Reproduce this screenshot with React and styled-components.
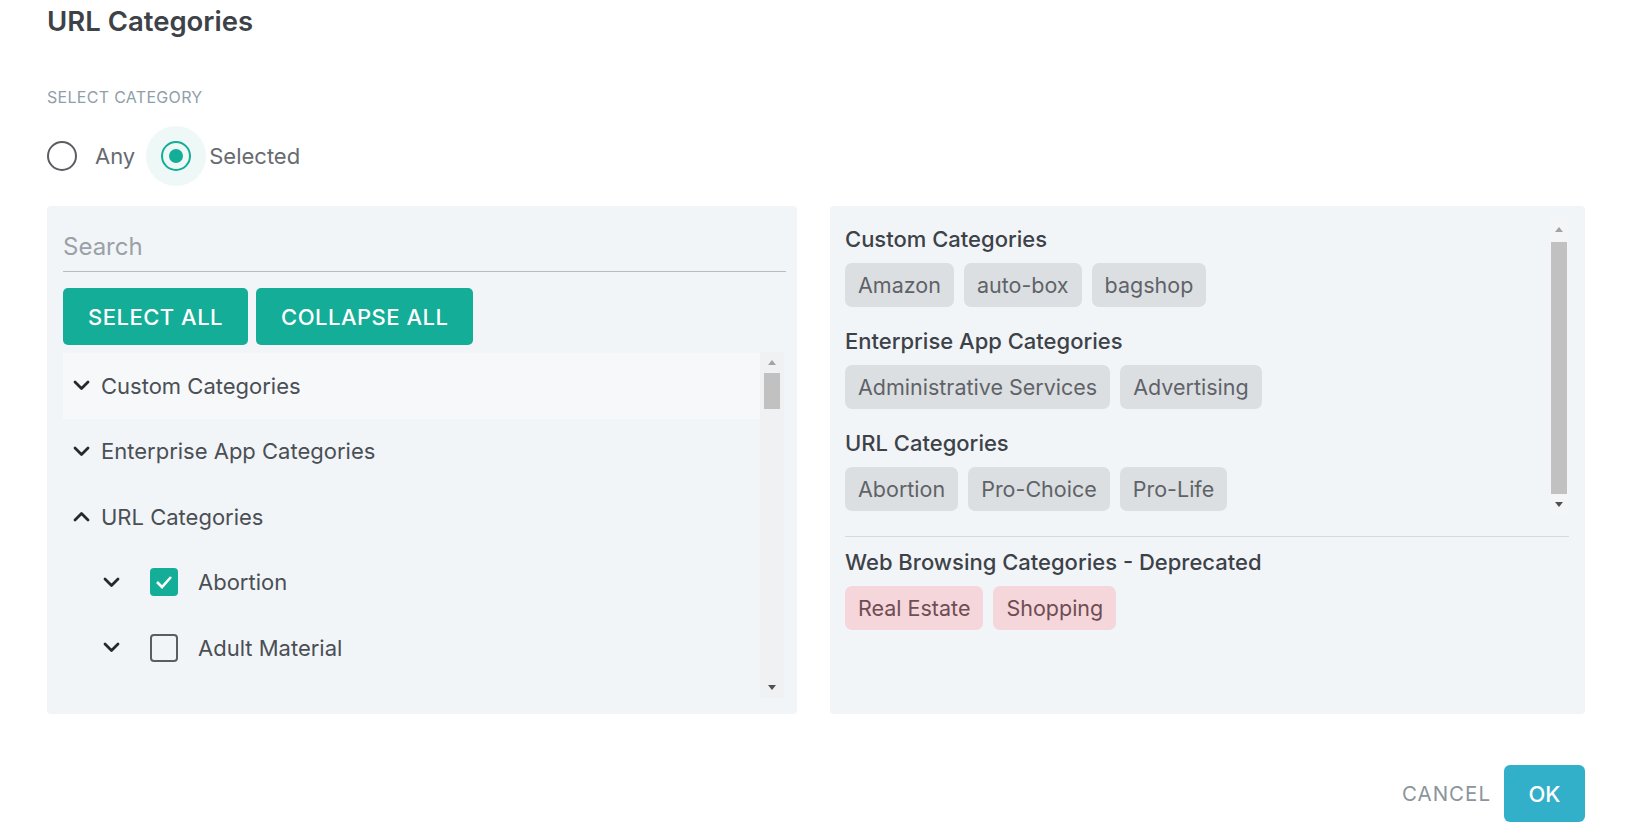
import React from 'react';
import styled, { createGlobalStyle } from 'styled-components';

const GlobalStyle = createGlobalStyle`
  * { box-sizing: border-box; }
  body {
    margin: 0;
    background: #ffffff;
    font-family: Inter, "Noto Sans", sans-serif;
  }
`;

const Page = styled.div`
  width: 1632px;
  height: 837px;
  padding: 5px 47px 0 47px;
  display: flex;
  flex-direction: column;
`;

const Title = styled.h1`
  margin: 0;
  font-size: 27.5px;
  line-height: 33px;
  font-weight: 600;
  color: #3d4248;
`;

const SectionLabel = styled.div`
  margin-top: 49px;
  font-size: 16px;
  line-height: 20px;
  letter-spacing: 0.3px;
  color: #8fa0aa;
`;

const RadioGroup = styled.div`
  display: flex;
  align-items: center;
  gap: 11px;
  margin-top: 19px;
  height: 60px;
`;

const RadioLabel = styled.label`
  display: flex;
  align-items: center;
  font-size: 22px;
  color: #666b70;
`;

const RadioHalo = styled.span`
  width: 60px;
  height: 60px;
  border-radius: 50%;
  display: flex;
  align-items: center;
  justify-content: center;
  margin-left: ${(p) => (p.$first ? '-15px' : '0')};
  margin-right: 3px;
  background: ${(p) => (p.$checked ? '#eef8f6' : 'transparent')};
`;

const RadioCircle = styled.span`
  width: 30px;
  height: 30px;
  border-radius: 50%;
  border: 2.5px solid ${(p) => (p.$checked ? '#14ad97' : '#5a5e62')};
  display: flex;
  align-items: center;
  justify-content: center;

  &::after {
    content: '';
    width: 14px;
    height: 14px;
    border-radius: 50%;
    background: ${(p) => (p.$checked ? '#14ad97' : 'transparent')};
  }
`;

const Panels = styled.div`
  display: grid;
  grid-template-columns: 750px 755px;
  gap: 33px;
  margin-top: 20px;
  height: 508px;
`;

const Panel = styled.div`
  background: #f2f5f8;
  border-radius: 4px;
  display: flex;
  flex-direction: column;
`;

const LeftPanel = styled(Panel)`
  padding: 18px 13px 16px 16px;
`;

const SearchInput = styled.input`
  height: 48px;
  margin-right: -2px;
  border: none;
  border-bottom: 1px solid #b8bcc0;
  background: transparent;
  font-family: inherit;
  font-size: 24px;
  color: #3d4248;
  padding: 0 0 3px 0;
  outline: none;

  &::placeholder {
    color: #9aa1a7;
  }
`;

const ButtonRow = styled.div`
  display: flex;
  gap: 8px;
  margin-top: 16px;
`;

const TealButton = styled.button`
  height: 57px;
  padding: 0 25px;
  border: none;
  border-radius: 5px;
  background: #14ad97;
  color: #ffffff;
  font-family: inherit;
  font-size: 22px;
  font-weight: 500;
  letter-spacing: 0.5px;
`;

const TreeArea = styled.div`
  margin-top: 7px;
  flex: 1;
  display: flex;
`;

const TreeList = styled.div`
  flex: 1;
  padding-top: 1px;
`;

const TreeRow = styled.div`
  height: 65.5px;
  display: flex;
  align-items: center;
  padding-left: ${(p) => (p.$child ? '40px' : '10px')};
  background: ${(p) => (p.$hover ? '#f6f8fa' : 'transparent')};
  font-size: 22px;
  color: #4a4f55;
`;

const ChevronBox = styled.span`
  width: 17px;
  display: flex;
  margin-right: ${(p) => (p.$child ? '30px' : '11px')};
`;

const CheckBox = styled.span`
  width: 28px;
  height: 28px;
  border-radius: 4px;
  margin-right: 20px;
  display: flex;
  align-items: center;
  justify-content: center;
  background: ${(p) => (p.$checked ? '#14ad97' : 'transparent')};
  border: ${(p) => (p.$checked ? 'none' : '2.5px solid #5a5e62')};
`;

const ScrollTrack = styled.div`
  width: ${(p) => p.$width}px;
  background: ${(p) => p.$bg};
  display: flex;
  flex-direction: column;
  align-items: center;
`;

const ScrollArrow = styled.span`
  height: ${(p) => p.$h}px;
  display: flex;
  align-items: center;
  justify-content: center;
`;

const ScrollThumb = styled.div`
  width: 16px;
  background: #c1c1c1;
`;

const RightPanel = styled(Panel)`
  padding: 11px 9px 0 15px;
`;

const ScrollArea = styled.div`
  height: 298px;
  margin-right: 8px;
  display: flex;
`;

const SelectedList = styled.div`
  flex: 1;
  padding-top: 8px;
  display: flex;
  flex-direction: column;
  gap: 20px;
`;

const Group = styled.div`
  display: flex;
  flex-direction: column;
  gap: 10px;
`;

const GroupTitle = styled.div`
  font-size: 22px;
  line-height: 28px;
  font-weight: 500;
  color: #3d4248;
`;

const ChipRow = styled.div`
  display: flex;
  gap: 10px;
`;

const Chip = styled.span`
  height: 44px;
  padding: 0 13px;
  border-radius: 7px;
  display: flex;
  align-items: center;
  font-size: 21.5px;
  background: ${(p) => (p.$deprecated ? '#f5d6db' : '#dcdfe2')};
  color: ${(p) => (p.$deprecated ? '#6e4d53' : '#5f6368')};
`;

const Divider = styled.div`
  height: 1px;
  background: #d8dbde;
  margin: 21px 7px 11px 0;
`;

const Footer = styled.div`
  margin-top: 51px;
  display: flex;
  justify-content: flex-end;
  align-items: center;
  gap: 13px;
`;

const TextButton = styled.button`
  border: none;
  background: none;
  padding: 0;
  font-family: inherit;
  font-size: 20.5px;
  letter-spacing: 1px;
  color: #8b959b;
`;

const PrimaryButton = styled.button`
  width: 81px;
  height: 57px;
  border: none;
  border-radius: 6px;
  background: #33b0c9;
  color: #ffffff;
  font-family: inherit;
  font-size: 22px;
  font-weight: 500;
`;

const Chevron = ({ up }) => (
  <svg width="17" height="11" viewBox="0 0 17 11">
    <polyline
      points={up ? '2,9 8.5,2.5 15,9' : '2,2 8.5,8.5 15,2'}
      fill="none"
      stroke="#25292d"
      strokeWidth="2.8"
      strokeLinecap="round"
      strokeLinejoin="round"
    />
  </svg>
);

const Arrow = ({ up, color }) => (
  <svg width="8" height="5" viewBox="0 0 8 5">
    <polygon points={up ? '0,5 4,0 8,5' : '0,0 8,0 4,5'} fill={color} />
  </svg>
);

const Radio = ({ label, checked, first }) => (
  <RadioLabel>
    <RadioHalo $checked={checked} $first={first}>
      <RadioCircle $checked={checked} />
    </RadioHalo>
    {label}
  </RadioLabel>
);

const selected = [
  { title: 'Custom Categories', items: ['Amazon', 'auto-box', 'bagshop'] },
  { title: 'Enterprise App Categories', items: ['Administrative Services', 'Advertising'] },
  { title: 'URL Categories', items: ['Abortion', 'Pro-Choice', 'Pro-Life'] },
];

export default function App() {
  return (
    <>
      <GlobalStyle />
      <Page>
        <Title>URL Categories</Title>
        <SectionLabel>SELECT CATEGORY</SectionLabel>
        <RadioGroup>
          <Radio label="Any" first />
          <Radio label="Selected" checked />
        </RadioGroup>

        <Panels>
          <LeftPanel>
            <SearchInput placeholder="Search" />
            <ButtonRow>
              <TealButton>SELECT ALL</TealButton>
              <TealButton>COLLAPSE ALL</TealButton>
            </ButtonRow>
            <TreeArea>
              <TreeList>
                <TreeRow $hover>
                  <ChevronBox><Chevron /></ChevronBox>
                  Custom Categories
                </TreeRow>
                <TreeRow>
                  <ChevronBox><Chevron /></ChevronBox>
                  Enterprise App Categories
                </TreeRow>
                <TreeRow>
                  <ChevronBox><Chevron up /></ChevronBox>
                  URL Categories
                </TreeRow>
                <TreeRow $child>
                  <ChevronBox $child><Chevron /></ChevronBox>
                  <CheckBox $checked>
                    <svg width="20" height="16" viewBox="0 0 20 16">
                      <polyline points="3,8 8,13 17,3" fill="none" stroke="#fff" strokeWidth="2.6" />
                    </svg>
                  </CheckBox>
                  Abortion
                </TreeRow>
                <TreeRow $child>
                  <ChevronBox $child><Chevron /></ChevronBox>
                  <CheckBox />
                  Adult Material
                </TreeRow>
              </TreeList>
              <ScrollTrack $width={24} $bg="#f0f1f2">
                <ScrollArrow $h={21}><Arrow up color="#a3a3a3" /></ScrollArrow>
                <ScrollThumb style={{ height: 36 }} />
                <div style={{ flex: 1 }} />
                <ScrollArrow $h={22}><Arrow color="#505050" /></ScrollArrow>
              </ScrollTrack>
            </TreeArea>
          </LeftPanel>

          <RightPanel>
            <ScrollArea>
              <SelectedList>
                {selected.map((g) => (
                  <Group key={g.title}>
                    <GroupTitle>{g.title}</GroupTitle>
                    <ChipRow>
                      {g.items.map((i) => (
                        <Chip key={i}>{i}</Chip>
                      ))}
                    </ChipRow>
                  </Group>
                ))}
              </SelectedList>
              <ScrollTrack $width={18} $bg="#f4f5f6">
                <ScrollArrow $h={25}><Arrow up color="#a3a3a3" /></ScrollArrow>
                <ScrollThumb style={{ height: 252 }} />
                <div style={{ flex: 1 }} />
                <ScrollArrow $h={21}><Arrow color="#505050" /></ScrollArrow>
              </ScrollTrack>
            </ScrollArea>
            <Divider />
            <Group>
              <GroupTitle>Web Browsing Categories - Deprecated</GroupTitle>
              <ChipRow>
                <Chip $deprecated>Real Estate</Chip>
                <Chip $deprecated>Shopping</Chip>
              </ChipRow>
            </Group>
          </RightPanel>
        </Panels>

        <Footer>
          <TextButton>CANCEL</TextButton>
          <PrimaryButton>OK</PrimaryButton>
        </Footer>
      </Page>
    </>
  );
}
